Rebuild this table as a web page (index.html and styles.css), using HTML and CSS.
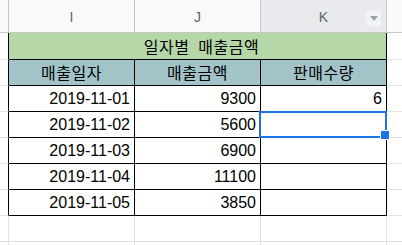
FILE: index.html
```html
<!DOCTYPE html>
<html lang="ko">
<head>
<meta charset="utf-8">
<link rel="stylesheet" href="styles.css">
</head>
<body>
<div class="sheet">
  <div class="row hdr">
    <div class="c corner"></div>
    <div class="c ch">I</div>
    <div class="c ch">J</div>
    <div class="c ch on">K<span class="dd"><svg width="8" height="5" viewBox="0 0 8 5"><path d="M0 0H8L4 5Z" fill="#9aa0a6"/></svg></span></div>
    <div class="c ch rest"></div>
  </div>
  <div class="row title-row">
    <div class="c edge"></div>
    <div class="c t title">일자별 매출금액</div>
    <div class="c g"></div>
  </div>
  <div class="row">
    <div class="c edge"></div>
    <div class="c t head">매출일자</div>
    <div class="c t head">매출금액</div>
    <div class="c t head">판매수량</div>
    <div class="c g"></div>
  </div>
  <div class="row">
    <div class="c edge"></div>
    <div class="c t num">2019-11-01</div>
    <div class="c t num">9300</div>
    <div class="c t num">6</div>
    <div class="c g"></div>
  </div>
  <div class="row">
    <div class="c edge"></div>
    <div class="c t num">2019-11-02</div>
    <div class="c t num">5600</div>
    <div class="c t num active"><span class="sel"></span><span class="handle"></span></div>
    <div class="c g"></div>
  </div>
  <div class="row">
    <div class="c edge"></div>
    <div class="c t num">2019-11-03</div>
    <div class="c t num">6900</div>
    <div class="c t num"></div>
    <div class="c g"></div>
  </div>
  <div class="row">
    <div class="c edge"></div>
    <div class="c t num">2019-11-04</div>
    <div class="c t num">11100</div>
    <div class="c t num"></div>
    <div class="c g"></div>
  </div>
  <div class="row">
    <div class="c edge"></div>
    <div class="c t num">2019-11-05</div>
    <div class="c t num">3850</div>
    <div class="c t num"></div>
    <div class="c g"></div>
  </div>
  <div class="row empty">
    <div class="c ge"></div>
    <div class="c gc"></div>
    <div class="c gc"></div>
    <div class="c gc"></div>
    <div class="c g"></div>
  </div>
  <div class="row empty">
    <div class="c ge"></div>
    <div class="c gc"></div>
    <div class="c gc"></div>
    <div class="c gc"></div>
    <div class="c g"></div>
  </div>
</div>
</body>
</html>
```
FILE: styles.css
```css
* { box-sizing: border-box; }
html, body { margin: 0; padding: 0; background: #fff; overflow: hidden; height: 245px; }
body { font-family: "Liberation Sans", "Noto Sans CJK KR", sans-serif; color: #000; }

.sheet { width: 402px; height: 245px; overflow: hidden; }
.row {
  display: grid;
  grid-template-columns: 9px 126px 126px 126px 1fr;
  height: 26px;
}
.row.hdr { height: 33px; }
.row.title-row { height: 27px; }

.c {
  border-right: 1px solid #e2e2e2;
  border-bottom: 1px solid #e2e2e2;
  position: relative;
  min-width: 0;
}

.hdr .c {
  background: #f8f9fa;
  border-right: 1px solid #c7c7c7;
  border-bottom: 1px solid #c7c7c7;
}
.hdr .ch {
  display: flex;
  align-items: center;
  justify-content: center;
  padding-top: 2px;
  font-size: 14px;
  color: #5f6368;
}
.hdr .ch.on { background: #e8eaed; }
.hdr .ch.rest { border-right: none; }
.dd {
  position: absolute;
  right: 5px;
  top: 11px;
  width: 15px;
  height: 15px;
  background: #f1f3f4;
  display: flex;
  align-items: center;
  justify-content: center;
}

.edge { border-right: 1px solid #000; }
.g { border-right: none; }
.ge { border-right: 1px solid #e2e2e2; }

.t {
  border-right: 1px solid #000;
  border-bottom: 1px solid #000;
  font-size: 16px;
  line-height: 25px;
  white-space: nowrap;
}
.title {
  grid-column: span 3;
  background: #b6d7a8;
  text-align: center;
  font-family: "Noto Sans CJK KR", sans-serif;
  font-size: 16px;
  line-height: 26px;
  letter-spacing: 0.5px;
  word-spacing: 4px;
  padding-left: 8px;
}
.head {
  background: #a2c4c9;
  text-align: center;
  font-family: "Noto Sans CJK KR", sans-serif;
  font-size: 16px;
  letter-spacing: 0.5px;
}
.num {
  text-align: right;
  padding-right: 4px;
}

.sel {
  position: absolute;
  left: -2px;
  top: -1px;
  right: -1px;
  bottom: -1px;
  border: 2px solid #1a73e8;
}
.handle {
  position: absolute;
  right: -4px;
  bottom: -3px;
  width: 10px;
  height: 10px;
  background: #1a73e8;
  border: 1px solid #fff;
  z-index: 2;
}
```
